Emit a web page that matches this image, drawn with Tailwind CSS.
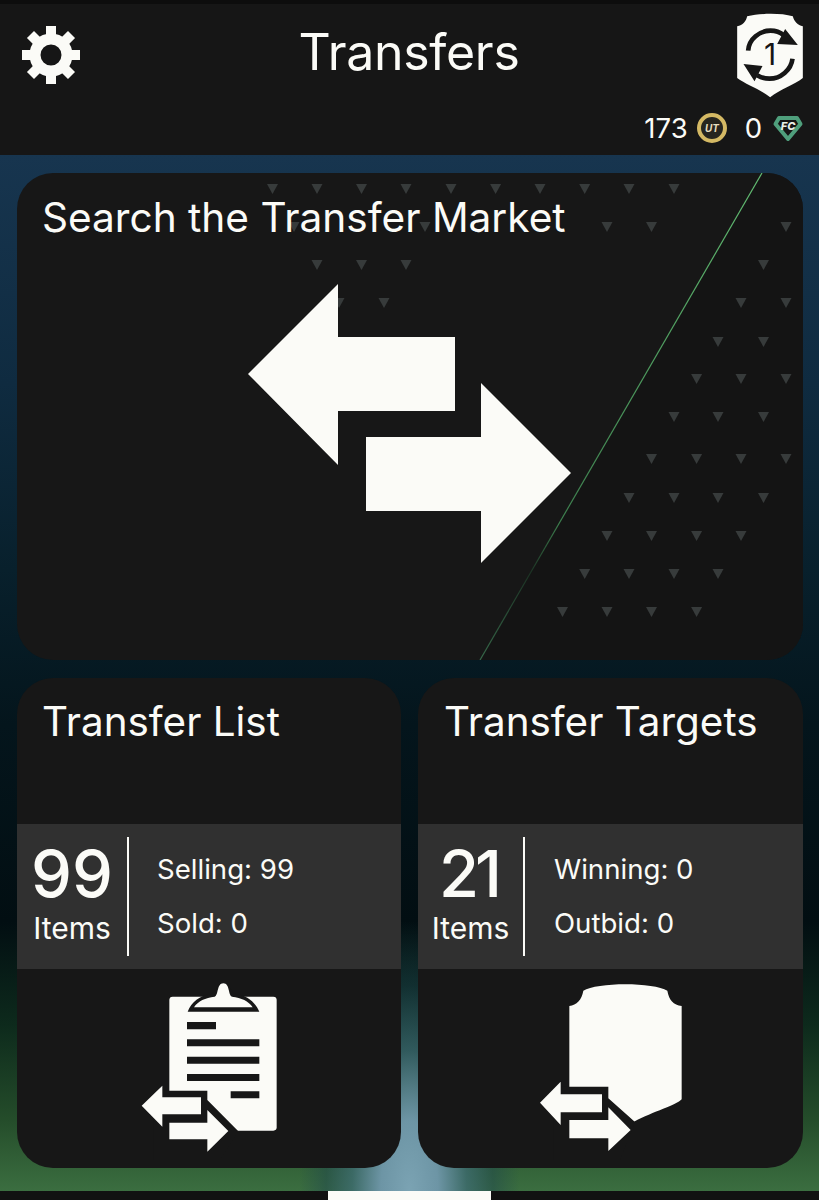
<!DOCTYPE html>
<html lang="en">
<head>
  <meta charset="UTF-8">
  <meta name="viewport" content="width=device-width, initial-scale=1.0">
  <title>Transfers</title>
  <script src="https://cdn.jsdelivr.net/npm/@tailwindcss/browser@4"></script>
</head>
<body class="w-[819px] h-[1200px] overflow-hidden bg-[#111111] font-['Inter',sans-serif] text-[#fbfbf7]">
  <!-- status strip -->
  <div class="h-1 bg-[#0d0d0d]"></div>

  <!-- header -->
  <header class="relative h-[151px] bg-[#161616]">
    <div class="flex items-start justify-between pl-[21px] pr-4 pt-[9px]">
      <svg class="w-[60px] h-[60px] mt-[12px]" viewBox="0 0 60 60">
        <g fill="#fbfbf7">
          <rect x="25" y="1" width="10" height="58"/>
          <rect x="25" y="1" width="10" height="58" transform="rotate(45 30 30)"/>
          <rect x="25" y="1" width="10" height="58" transform="rotate(90 30 30)"/>
          <rect x="25" y="1" width="10" height="58" transform="rotate(135 30 30)"/>
        </g>
        <circle cx="30" cy="30" r="16" fill="#161616" stroke="#fbfbf7" stroke-width="11"/>
      </svg>
      <h1 class="text-[50px] leading-[60px] mt-[9px] tracking-[-0.3px]">Transfers</h1>
      <svg class="w-[66px] h-[85px]" viewBox="348 35 197 255">
        <path fill="#fbfbf7" d="M348,75 C365,72 375,60 378,45 C420,35 480,35 515,45 C518,60 530,72 545,75 L545,230 C520,250 475,265 447,288 C420,265 375,250 348,230 Z"/>
        <g fill="none" stroke="#161616" stroke-width="14">
          <path d="M381,148 C383,112 416,88 448,88 C462,88 476,92 488,102"/>
          <path d="M514,172 C510,206 478,232 445,232 C430,232 418,228 408,222"/>
        </g>
        <path fill="#161616" d="M530,131 L492,83 L468,128 Z M367,188 L424,194 L400,240 Z"/>
        <text x="447" y="191" text-anchor="middle" font-size="90" font-family="Inter" fill="#161616">1</text>
      </svg>
    </div>
    <div class="absolute right-4 bottom-[11px] flex items-center text-[27.5px] leading-8">
      <span>173</span>
      <svg class="w-[30px] h-[30px] ml-[9px]" viewBox="0 0 30 30">
        <circle cx="15" cy="15" r="13" fill="#26251f" stroke="#d4b964" stroke-width="4"/>
        <text x="15" y="19" text-anchor="middle" font-size="10" font-weight="700" font-style="italic" font-family="Inter" fill="#e8dfc0">UT</text>
      </svg>
      <span class="ml-[18px]">0</span>
      <svg class="w-[30px] h-[27px] ml-[11px]" viewBox="0 0 30 27">
        <path fill="#161616" stroke="#4f9f7c" stroke-width="4" stroke-linejoin="round" d="M6,3 H24 L27.5,9 L15,24 L2.5,9 Z"/>
        <text x="15" y="15" text-anchor="middle" font-size="11" font-weight="800" font-style="italic" font-family="Inter" fill="#e9efe9">FC</text>
      </svg>
    </div>
  </header>

  <!-- cards over the pitch background -->
  <main class="h-[1036px] pl-[17px] pr-4 pt-[18px] flex flex-col gap-[18px] bg-[radial-gradient(ellipse_110px_270px_at_50%_100%,#7ba3b3_0%,#6d95a5_26%,#3e6b78b0_52%,#1d445070_76%,#1d445000_100%),linear-gradient(180deg,#17354f_0%,#0f2b40_22%,#08202c_40%,#04151c_55%,#020e12_74%,#0d2a1c_84%,#244c2a_93%,#3b6e40_100%)]">
    <section class="relative h-[487px] rounded-[36px] bg-[#171717] overflow-hidden">
      <svg class="absolute inset-0" width="786" height="487" viewBox="17 173 786 487">
        <defs>
          <linearGradient id="rule" x1="0" y1="0" x2="0" y2="1">
            <stop offset="0" stop-color="#62bd72"/>
            <stop offset="0.72" stop-color="#3d7f4e"/>
            <stop offset="0.82" stop-color="#1c3324"/>
            <stop offset="1" stop-color="#37694a"/>
          </linearGradient>
        </defs>
        <polygon points="762,173 803,173 803,660 480,660" fill="#141414"/>
        <line x1="762" y1="173" x2="480" y2="660" stroke="url(#rule)" stroke-width="1.2"/>
        <g id="tris" fill="#373b3b"></g>
        <path fill="#fbfbf7" d="M248,374 L338,284 V337 H455 V411 H338 V465 Z"/>
        <path fill="#fbfbf7" d="M366,437 H481 V383 L571,473 L481,563 V511 H366 Z"/>
      </svg>
      <h2 class="relative pl-[25px] pt-[19px] text-[40.6px] leading-[52px]">Search the Transfer Market</h2>
    </section>

    <div class="grid grid-cols-[384px_385px] gap-[17px]">
      <article class="h-[490px] rounded-[36px] bg-[#171717] overflow-hidden flex flex-col">
        <h2 class="h-[146px] pl-[25px] pt-[18px] text-[40.4px] leading-[52px]">Transfer List</h2>
        <div class="h-[145px] bg-[#303030] flex items-center">
          <div class="w-[110px] flex flex-col items-center">
            <span class="text-[65px] leading-[54px] mt-[-3px] font-medium">99</span>
            <span class="text-[30px] leading-[30px] mt-[12px]">Items</span>
          </div>
          <div class="w-[2px] h-[119px] bg-[#fbfbf7]"></div>
          <div class="pl-[28px] pb-[2px] flex flex-col gap-[22px] text-[27.6px] leading-8">
            <span>Selling: 99</span>
            <span>Sold: 0</span>
          </div>
        </div>
        <div class="flex-1 flex justify-center">
          <svg class="w-[180px] h-[190px] mt-[1px] ml-[1px]" viewBox="0 0 540 570">
            <rect x="148" y="80" width="322" height="402" rx="10" fill="#fbfbf7"/>
            <path fill="#171717" d="M203,125 C214,96 240,76 272,72 C288,70 290,40 310,40 C330,40 332,70 348,72 C380,76 406,96 418,125 Z"/>
            <path fill="#fbfbf7" d="M222,112 C234,92 256,84 284,80 C296,76 290,40 310,40 C330,40 324,76 336,80 C364,84 386,92 398,112 Z"/>
            <path fill="#171717" d="M201,156 H288 V178 H201 Z M201,208 H418 V229 H201 Z M201,260 H418 V281 H201 Z M201,312 H418 V333 H201 Z M332,364 H418 V385 H332 Z"/>
            <path fill="#171717" d="M100,362 H262 V390 L355,484 L300,570 H100 Z"/>
            <path fill="#fbfbf7" d="M65,407 L127,347 V382 H243 V433 H127 V470 Z"/>
            <path fill="#fbfbf7" d="M148,458 H262 V420 L325,483 L262,545 V508 H148 Z"/>
          </svg>
        </div>
      </article>

      <article class="h-[490px] rounded-[36px] bg-[#171717] overflow-hidden flex flex-col">
        <h2 class="h-[146px] pl-[26px] pt-[18px] text-[40.4px] leading-[52px]">Transfer Targets</h2>
        <div class="h-[145px] bg-[#303030] flex items-center">
          <div class="w-[105px] flex flex-col items-center">
            <span class="text-[65px] leading-[54px] mt-[-3px] tracking-[-4px] font-medium pr-1">21</span>
            <span class="text-[30px] leading-[30px] mt-[12px]">Items</span>
          </div>
          <div class="w-[2px] h-[119px] bg-[#fbfbf7]"></div>
          <div class="pl-[29px] pb-[2px] flex flex-col gap-[22px] text-[27.6px] leading-8">
            <span>Winning: 0</span>
            <span>Outbid: 0</span>
          </div>
        </div>
        <div class="flex-1 flex justify-center">
          <svg class="w-[180px] h-[190px] mt-[1px] ml-[-1px]" viewBox="0 0 540 570">
            <path fill="#fbfbf7" d="M148,108 C170,105 185,90 190,62 C230,36 402,36 442,62 C447,90 460,105 485,108 L485,388 C470,405 400,425 342,455 L200,460 L148,400 Z"/>
            <path fill="#171717" d="M100,350 H265 V385 L345,456 L300,570 H100 Z"/>
            <path fill="#fbfbf7" d="M60,398 L122,335 V373 H246 V427 H122 V465 Z"/>
            <path fill="#fbfbf7" d="M148,450 H265 V412 L332,480 L265,543 V505 H148 Z"/>
          </svg>
        </div>
      </article>
    </div>
  </main>

  <!-- home indicator -->
  <div class="h-[9px] bg-[#111111] flex justify-center">
    <div class="w-[163px] h-[9px] bg-[#fbfbf7]"></div>
  </div>

  <script>
    // background triangles of the market card: y -> x positions
    const rows = {
      189: [272.5, 317, 361.5, 406, 451, 495.6, 540, 584.7, 629, 674],
      227: [294, 425, 607, 651.5, 786],
      265: [317, 361.5, 406, 763.5],
      303: [339, 384, 741, 786],
      342: [718, 763.5],
      379: [696.6, 741, 786],
      417: [674, 718, 763.5],
      459: [651.5, 696.6, 741, 786],
      498: [629, 674, 718, 763.5],
      536: [607, 651.5, 696.6, 741],
      574: [584.7, 629, 674, 718],
      612: [562.5, 607, 651.5, 696.6]
    };
    const g = document.getElementById('tris');
    let out = '';
    for (const y in rows) {
      for (const x of rows[y]) {
        const t = +y - 5;
        out += `<polygon points="${x - 5.5},${t} ${x + 5.5},${t} ${x},${t + 10}"/>`;
      }
    }
    g.innerHTML = out;
  </script>
</body>
</html>
